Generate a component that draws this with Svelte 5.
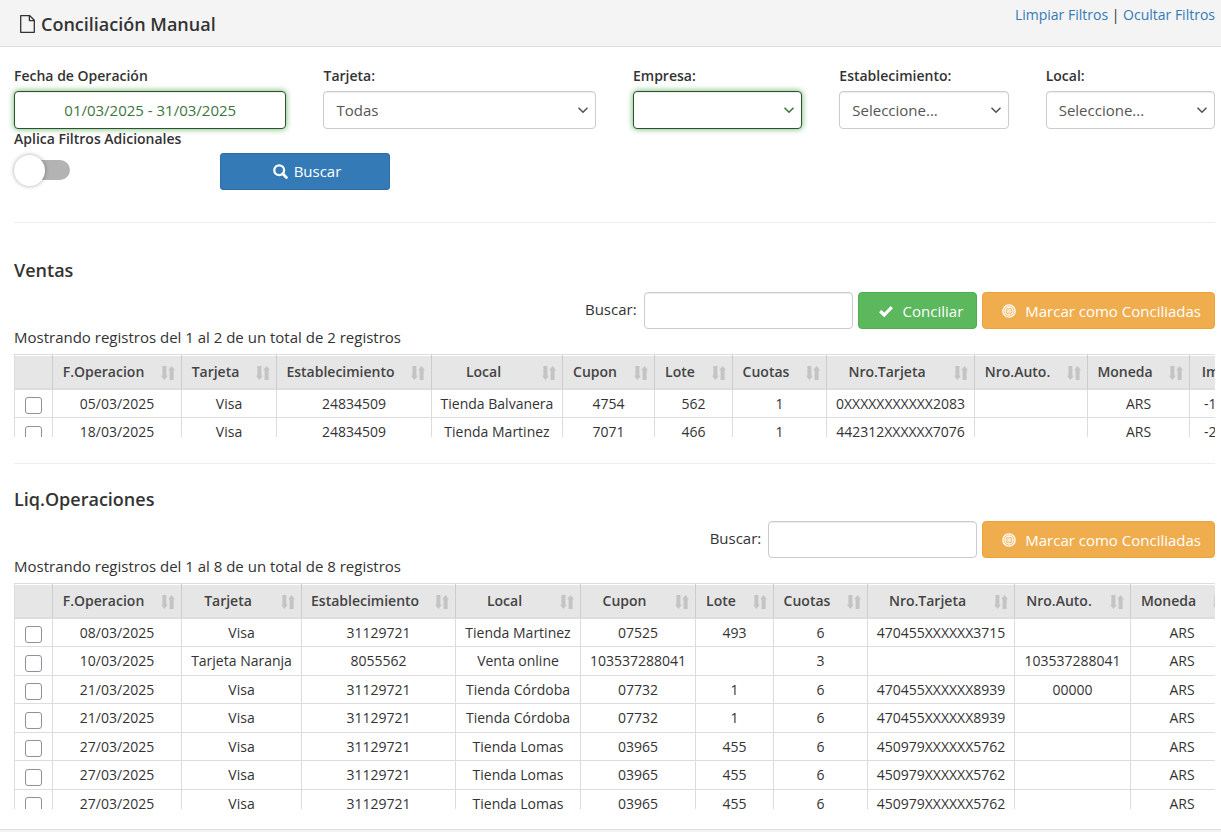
<script lang="ts">
    type Column = { key: string; label: string };
    type Row = Record<string, string>;

    const baseColumns: Column[] = [
        { key: 'fecha', label: 'F.Operacion' },
        { key: 'tarjeta', label: 'Tarjeta' },
        { key: 'establecimiento', label: 'Establecimiento' },
        { key: 'local', label: 'Local' },
        { key: 'cupon', label: 'Cupon' },
        { key: 'lote', label: 'Lote' },
        { key: 'cuotas', label: 'Cuotas' },
        { key: 'nroTarjeta', label: 'Nro.Tarjeta' },
        { key: 'nroAuto', label: 'Nro.Auto.' },
        { key: 'moneda', label: 'Moneda' }
    ];

    const ventasColumns: Column[] = [...baseColumns, { key: 'importe', label: 'Importe' }];

    // column widths in px, the first one is the checkbox
    const ventasWidths = [38, 129, 95, 155, 131, 92, 78, 94, 148, 113, 102, 106];
    const operacionesWidths = [38, 129, 120, 154, 125, 115, 78, 94, 147, 116, 103];

    function makeRow(values: string[]): Row {
        const row: Row = {};
        ventasColumns.forEach((col, i) => (row[col.key] = values[i] ?? ''));
        return row;
    }

    const ventas: Row[] = [
        ['05/03/2025', 'Visa', '24834509', 'Tienda Balvanera', '4754', '562', '1', '0XXXXXXXXXXX2083', '', 'ARS', '-1'],
        ['18/03/2025', 'Visa', '24834509', 'Tienda Martinez', '7071', '466', '1', '442312XXXXXX7076', '', 'ARS', '-2']
    ].map(makeRow);

    const operaciones: Row[] = [
        ['08/03/2025', 'Visa', '31129721', 'Tienda Martinez', '07525', '493', '6', '470455XXXXXX3715', '', 'ARS'],
        ['10/03/2025', 'Tarjeta Naranja', '8055562', 'Venta online', '103537288041', '', '3', '', '103537288041', 'ARS'],
        ['21/03/2025', 'Visa', '31129721', 'Tienda Córdoba', '07732', '1', '6', '470455XXXXXX8939', '00000', 'ARS'],
        ['21/03/2025', 'Visa', '31129721', 'Tienda Córdoba', '07732', '1', '6', '470455XXXXXX8939', '', 'ARS'],
        ['27/03/2025', 'Visa', '31129721', 'Tienda Lomas', '03965', '455', '6', '450979XXXXXX5762', '', 'ARS'],
        ['27/03/2025', 'Visa', '31129721', 'Tienda Lomas', '03965', '455', '6', '450979XXXXXX5762', '', 'ARS'],
        ['27/03/2025', 'Visa', '31129721', 'Tienda Lomas', '03965', '455', '6', '450979XXXXXX5762', '', 'ARS']
    ].map(makeRow);

    let fecha = $state('01/03/2025 - 31/03/2025');
    let adicionales = $state(false);
    let buscarVentas = $state('');
    let buscarOperaciones = $state('');

    function filtrar(rows: Row[], texto: string) {
        const t = texto.trim().toLowerCase();
        if (!t) return rows;
        return rows.filter((row) => Object.values(row).some((v) => v.toLowerCase().includes(t)));
    }

    function total(widths: number[]) {
        return widths.reduce((sum, w) => sum + w, 0);
    }

    let ventasVisibles = $derived(filtrar(ventas, buscarVentas));
    let operacionesVisibles = $derived(filtrar(operaciones, buscarOperaciones));
</script>

{#snippet chevron()}
    <svg class="chevron" width="10" height="7" viewBox="0 0 10 7" aria-hidden="true">
        <path d="M1 1.2 L5 5.2 L9 1.2" fill="none" stroke="currentColor" stroke-width="1.6" stroke-linecap="round" />
    </svg>
{/snippet}

{#snippet marcar()}
    <button type="button" class="btn btn-warning">
        <svg width="14" height="14" viewBox="0 0 14 14" fill="none" stroke="currentColor" aria-hidden="true">
            <circle cx="7" cy="7" r="6.1" stroke-width="1.4" />
            <circle cx="7" cy="7" r="4" stroke-width="1.3" />
            <circle cx="7" cy="7" r="2.1" stroke-width="1" />
            <circle cx="7" cy="7" r="1" fill="currentColor" stroke="none" />
        </svg>
        Marcar como Conciliadas
    </button>
{/snippet}

{#snippet tabla(columns: Column[], widths: number[], rows: Row[])}
    <table style="width: {total(widths)}px">
        <colgroup>
            {#each widths as w}
                <col style="width: {w}px" />
            {/each}
        </colgroup>
        <thead>
            <tr>
                <th class="check"></th>
                {#each columns as col}
                    <th>
                        <div class="th-inner">
                            <span>{col.label}</span>
                            <svg width="14" height="14" viewBox="0 0 14 14" fill="currentColor" aria-hidden="true">
                                <path d="M1.4 0 H5.4 V9.8 H6.9 L3.4 14 L0 9.8 H1.4 Z" />
                                <path d="M8.6 14 H12.6 V4.2 H14 L10.6 0 L7.1 4.2 H8.6 Z" />
                            </svg>
                        </div>
                    </th>
                {/each}
            </tr>
        </thead>
        <tbody>
            {#each rows as row}
                <tr>
                    <td class="check"><input type="checkbox" aria-label="Seleccionar registro" /></td>
                    {#each columns as col}
                        <td class={col.key}>{row[col.key]}</td>
                    {/each}
                </tr>
            {/each}
        </tbody>
    </table>
{/snippet}

<div class="panel">
    <header>
        <h1>
            <svg width="15" height="18" viewBox="0 0 15 18" fill="none" stroke="currentColor" stroke-width="1.3" stroke-linejoin="round" aria-hidden="true">
                <path d="M0.7 0.7 H9.8 L14.3 5.2 V17.3 H0.7 Z" />
                <path d="M9.4 0.9 V5.6 H14.2" />
            </svg>
            Conciliación Manual
        </h1>
        <nav><a href="#limpiar">Limpiar Filtros</a> | <a href="#ocultar">Ocultar Filtros</a></nav>
    </header>

    <main>
        <form class="filters" onsubmit={(e) => e.preventDefault()}>
            <div class="field wide valid">
                <label for="fecha">Fecha de Operación</label>
                <input id="fecha" class="control centered" type="text" bind:value={fecha} />
            </div>
            <div class="field wide">
                <label for="tarjeta">Tarjeta:</label>
                <div class="select">
                    <select id="tarjeta" class="control"><option>Todas</option></select>
                    {@render chevron()}
                </div>
            </div>
            <div class="field valid">
                <label for="empresa">Empresa:</label>
                <div class="select">
                    <select id="empresa" class="control"><option></option></select>
                    {@render chevron()}
                </div>
            </div>
            <div class="field">
                <label for="establecimiento">Establecimiento:</label>
                <div class="select">
                    <select id="establecimiento" class="control"><option>Seleccione...</option></select>
                    {@render chevron()}
                </div>
            </div>
            <div class="field">
                <label for="local">Local:</label>
                <div class="select">
                    <select id="local" class="control"><option>Seleccione...</option></select>
                    {@render chevron()}
                </div>
            </div>
            <div class="field toggle-field">
                <label for="adicionales">Aplica Filtros Adicionales</label>
                <input id="adicionales" class="toggle" type="checkbox" bind:checked={adicionales} />
            </div>
            <div class="field submit">
                <button type="submit" class="btn btn-primary">
                    <svg width="15" height="15" viewBox="0 0 15 15" fill="none" stroke="currentColor" aria-hidden="true">
                        <circle cx="6.2" cy="6.2" r="4.9" stroke-width="2.3" />
                        <path d="M9.8 9.8 L13.4 13.4" stroke-width="2.8" stroke-linecap="round" />
                    </svg>
                    Buscar
                </button>
            </div>
        </form>

        <section class="ventas">
            <h2>Ventas</h2>
            <div class="toolbar">
                <label for="buscar-ventas">Buscar:</label>
                <input id="buscar-ventas" class="control search" type="search" bind:value={buscarVentas} />
                <button type="button" class="btn btn-success">
                    <svg width="14" height="14" viewBox="0 0 14 14" fill="none" stroke="currentColor" stroke-width="3.2" aria-hidden="true">
                        <path d="M1.2 7 L5.2 11 L12.8 3.2" />
                    </svg>
                    Conciliar
                </button>
                {@render marcar()}
            </div>
            <p>Mostrando registros del 1 al 2 de un total de 2 registros</p>
            <div class="scroll short">
                {@render tabla(ventasColumns, ventasWidths, ventasVisibles)}
            </div>
        </section>

        <section class="operaciones">
            <h2>Liq.Operaciones</h2>
            <div class="toolbar">
                <label for="buscar-operaciones">Buscar:</label>
                <input id="buscar-operaciones" class="control search" type="search" bind:value={buscarOperaciones} />
                {@render marcar()}
            </div>
            <p>Mostrando registros del 1 al 8 de un total de 8 registros</p>
            <div class="scroll tall">
                {@render tabla(baseColumns, operacionesWidths, operacionesVisibles)}
            </div>
        </section>
    </main>
</div>

<style>
    :global(body) {
        margin: 0;
        background: #f4f4f4;
    }

    .panel {
        background: #fff;
        border-bottom: 1px solid #ddd;
        color: #333;
        font-family: "Open Sans", "Noto Sans", sans-serif;
        font-size: 15px;
        line-height: 20px;
    }

    .panel * {
        box-sizing: border-box;
    }

    header {
        display: flex;
        justify-content: space-between;
        align-items: flex-start;
        padding: 5px 6px 12px 20px;
        background: #f4f4f4;
        border-bottom: 1px solid #ddd;
    }

    h1, h2 {
        margin: 0;
        font-size: 18px;
        font-weight: 600;
        line-height: 20px;
    }

    h1 {
        display: flex;
        align-items: center;
        gap: 6px;
        padding-top: 9px;
    }

    nav {
        font-size: 14px;
    }

    a {
        color: #337ab7;
        text-decoration: none;
    }

    main {
        padding: 19px 6px 20px 14px;
    }

    .filters {
        display: grid;
        grid-template-columns: repeat(12, 1fr);
        column-gap: 37px;
        padding-bottom: 32px;
    }

    .field {
        grid-column: span 2;
        min-width: 0;
    }

    .field.wide {
        grid-column: span 3;
    }

    .field label {
        display: block;
        margin-bottom: 5px;
        font-size: 14px;
        font-weight: 600;
        white-space: nowrap;
    }

    .toggle-field label {
        margin-bottom: 11px;
    }

    .control {
        width: 100%;
        height: 38px;
        padding: 0 12px;
        border: 1px solid #ccc;
        border-radius: 4px;
        outline: none;
        background: #fff;
        box-shadow: inset 0 1px 1px rgba(0, 0, 0, 0.075);
        color: #555;
        font: inherit;
        appearance: none;
    }

    .centered {
        text-align: center;
    }

    .valid .control {
        border-color: #2b542c;
        box-shadow: inset 0 1px 1px rgba(0, 0, 0, 0.075), 0 0 6px #67b168;
        color: #3c763d;
    }

    .select {
        display: grid;
        align-items: center;
        color: #555;
    }

    .valid .select {
        color: #3c763d;
    }

    .select > :global(*) {
        grid-area: 1 / 1;
    }

    .chevron {
        justify-self: end;
        margin-right: 8px;
        pointer-events: none;
    }

    .toggle {
        display: block;
        position: relative;
        width: 56px;
        height: 20px;
        margin: 0;
        border-radius: 10px;
        background: #b3b3b3;
        appearance: none;
    }

    .toggle::before {
        content: "";
        position: absolute;
        top: -5px;
        left: 0;
        width: 31px;
        height: 31px;
        border-radius: 50%;
        background: #fff;
        box-shadow: 0 0 4px rgba(0, 0, 0, 0.35);
    }

    .toggle:checked::before {
        left: 25px;
    }

    .submit {
        padding-top: 24px;
    }

    .btn {
        display: flex;
        align-items: center;
        justify-content: center;
        gap: 9px;
        height: 37px;
        padding: 1px 13px 0 19px;
        border: 1px solid;
        border-radius: 4px;
        color: #fff;
        font: inherit;
        white-space: nowrap;
        cursor: pointer;
    }

    .btn-primary {
        width: 100%;
        gap: 6px;
        padding: 0 13px 1px 17px;
        border-color: #2e6da4;
        border-radius: 3px;
        background: #337ab7;
    }

    .btn-success {
        gap: 10px;
        padding-left: 20px;
        border-color: #4cae4c;
        background: #5cb85c;
    }

    .btn-warning {
        border-color: #eea236;
        background: #f0ad4e;
    }

    section {
        border-top: 1px solid #eee;
    }

    .ventas {
        padding: 37px 0 26px;
    }

    .operaciones {
        padding-top: 25px;
    }

    .toolbar {
        display: flex;
        align-items: center;
        justify-content: flex-end;
        gap: 5px;
        margin-top: 12px;
    }

    .toolbar label {
        padding: 0 2px 4px 0;
    }

    .search {
        width: 209px;
        height: 37px;
    }

    p {
        margin: 0 0 9px;
        line-height: 16px;
    }

    .scroll {
        overflow: auto;
        scrollbar-width: none;
    }

    .short {
        max-height: 83px;
    }

    .tall {
        max-height: 226px;
    }

    table {
        table-layout: fixed;
        border-top: 1px solid #ddd;
        border-spacing: 0;
        font-size: 14px;
        text-align: center;
        white-space: nowrap;
    }

    th {
        height: 35px;
        padding: 0 6px 0 9px;
        border-left: 1px solid #ccc;
        border-bottom: 2px solid #ddd;
        background: #e6e6e6;
        box-shadow: inset 0 1px #fff;
        color: #444;
        font-weight: 600;
    }

    .th-inner {
        display: flex;
        align-items: center;
        gap: 16px;
    }

    .th-inner span {
        flex: 1;
    }

    .th-inner svg {
        flex: none;
        margin-top: 2px;
        color: #c4c4c4;
    }

    td {
        height: 28px;
        padding: 0 8px;
        border-left: 1px solid #ddd;
        border-bottom: 1px solid #ddd;
    }

    tr:nth-child(even) td {
        height: 29px;
    }

    th.check, td.check {
        padding: 0;
        border-left-color: #ddd;
    }

    td.importe {
        padding: 0 14px;
        text-align: left;
    }

    .check input {
        display: block;
        width: 17px;
        height: 17px;
        margin: 4px auto 0;
        border: 1px solid #8f8f9d;
        border-radius: 3px;
        background: #fff;
        appearance: none;
    }

    .check input:checked {
        background: #337ab7;
    }
</style>
